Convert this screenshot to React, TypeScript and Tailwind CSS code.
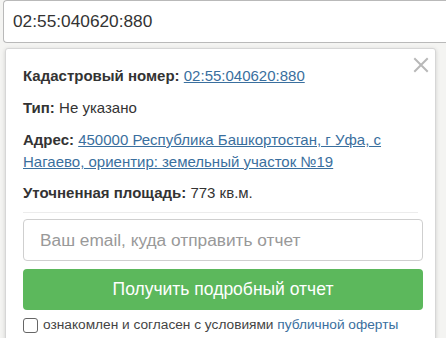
import React from 'react';

const App: React.FC = () => {
  return (
    <div
      className="w-[446px] h-[338px] overflow-hidden bg-[#f4f4f2] relative"
      style={{ fontFamily: '"Liberation Sans", Arial, sans-serif' }}
    >
      {/* Search field */}
      <div className="ml-[3px] h-[43px] bg-white border border-[#b9b9b9] border-r-0 rounded-l-[4px] flex items-center pl-[9px] text-[17.3px] text-[#333]">
        02:55:040620:880
      </div>

      {/* Popup card */}
      <div className="relative ml-[5px] mt-[5px] w-[431px] h-[300px] bg-white border border-[#d6d6d6] rounded-t-[3px] shadow-[0_1px_4px_rgba(0,0,0,0.15)] px-[17px] pt-[16px]">
        <button className="absolute right-[4px] top-[6px] w-[20px] h-[20px] flex items-center justify-center text-[#b8b8b8]">
          <svg width="16" height="16" viewBox="0 0 16 16" stroke="currentColor" strokeWidth="2" strokeLinecap="square">
            <path d="M2 2 L14 14 M14 2 L2 14" />
          </svg>
        </button>

        <div className="text-[15px] leading-[22px] text-[#333]">
          <p>
            <b>Кадастровый номер:</b>{' '}
            <a className="text-[#3a6f9e] underline">02:55:040620:880</a>
          </p>
          <p className="mt-[10px]">
            <b>Тип:</b> Не указано
          </p>
          <p className="mt-[10px]">
            <b>Адрес:</b>{' '}
            <a className="text-[#3a6f9e] underline">
              450000 Республика Башкортостан, г Уфа, с Нагаево, ориентир: земельный участок №19
            </a>
          </p>
          <p className="mt-[9px]">
            <b>Уточненная площадь:</b> 773 кв.м.
          </p>
        </div>

        <div className="mt-[8px] border-t border-[#ececec]" />

        <input
          className="mt-[6px] w-[400px] h-[42px] border border-[#cfcfcf] rounded-[4px] px-[16px] text-[17.3px] placeholder-[#999] outline-none"
          placeholder="Ваш email, куда отправить отчет"
        />

        <button className="mt-[8px] w-[400px] h-[41px] bg-[#5cb85c] rounded-[4px] text-white text-[17.5px]">
          Получить подробный отчет
        </button>

        <label className="mt-[5px] flex items-center gap-[5px] text-[13.7px] text-[#444]">
          <span className="w-[15px] h-[15px] border border-[#666] rounded-[3px] bg-white" />
          <span>
            ознакомлен и согласен с условиями{' '}
            <a className="text-[#3a6f9e]">публичной оферты</a>
          </span>
        </label>
        <label className="mt-[4px] flex items-center gap-[5px] text-[13.7px] text-[#444]">
          <span className="w-[15px] h-[15px] border border-[#666] rounded-[3px] bg-white" />
          <span>согласен на обработку персональных данных</span>
        </label>
      </div>
    </div>
  );
};

export default App;
